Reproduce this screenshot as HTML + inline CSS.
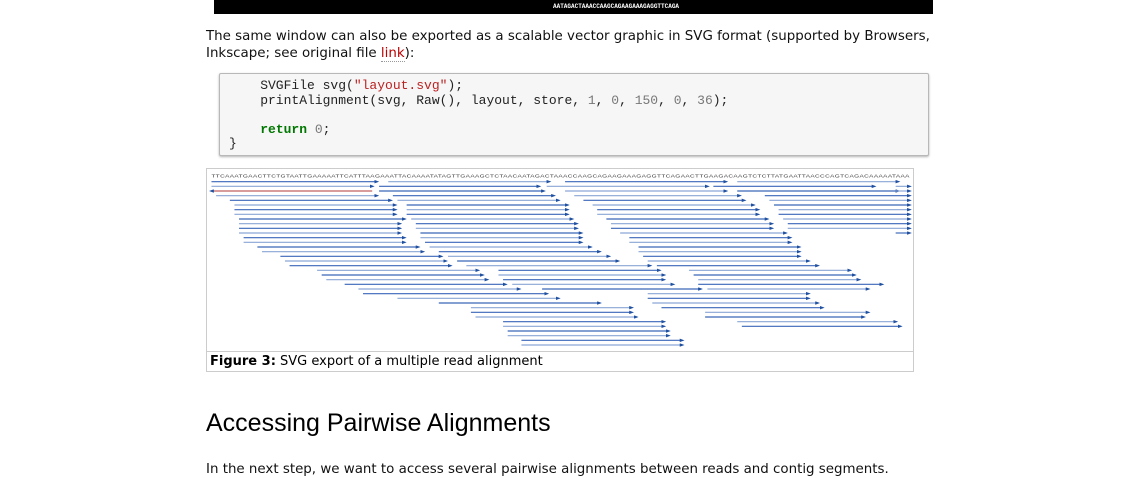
<!DOCTYPE html>
<html><head><meta charset="utf-8"><style>
body{margin:0;width:1131px;height:471px;background:#fff;overflow:hidden;position:relative;font-family:"DejaVu Sans",Verdana,sans-serif;}
.bar{position:absolute;left:214px;top:0;width:719px;height:14px;background:#000;}
.bar span{position:absolute;left:339px;top:3px;font:bold 6px "Liberation Mono",monospace;color:#fff;letter-spacing:0;}
p{position:absolute;margin:0;font-size:13.4px;line-height:17px;color:#111;}
a{color:#b00;text-decoration:none;border-bottom:1px dotted #999;}
.code{position:absolute;left:219px;top:73px;width:708px;height:81px;background:#f6f6f6;border:1px solid #b8b8b8;border-radius:2px;box-shadow:0 1px 2px rgba(0,0,0,.3);}
.code pre{margin:0;position:absolute;left:9px;top:5px;font:13px/14.5px "Liberation Mono","DejaVu Sans Mono",monospace;color:#222;}
.s{color:#b22;}.n{color:#777;}.k{color:#070;font-weight:bold;}
.fig{position:absolute;left:206px;top:168px;width:706px;height:202px;border:1px solid #ccc;}
.cap{position:absolute;left:0;top:182px;width:706px;height:20px;border-top:1px solid #ccc;font-size:13px;line-height:20px;}
.cap b{margin-left:3px;}
h2{position:absolute;left:206px;top:409px;margin:0;font:normal 25px "Liberation Sans",Arial,sans-serif;color:#000;}
</style></head><body>
<div class="bar"><span>AATAGACTAAACCAAGCAGAAGAAAGAGGTTCAGA</span></div>
<p style="left:206px;top:28px">The same window can also be exported as a scalable vector graphic in SVG format (supported by Browsers,<br>Inkscape; see original file <a>link</a>):</p>
<div class="code"><pre>    SVGFile svg(<span class="s">"layout.svg"</span>);
    printAlignment(svg, Raw(), layout, store, <span class="n">1</span>, <span class="n">0</span>, <span class="n">150</span>, <span class="n">0</span>, <span class="n">36</span>);

    <span class="k">return</span> <span class="n">0</span>;
}</pre></div>
<div class="fig"><div class="cap"><b>Figure 3:</b> SVG export of a multiple read alignment</div></div>
<svg style="position:absolute;left:200px;top:165px" width="720" height="183" viewBox="0 0 1568 549" preserveAspectRatio="none">
<defs><marker id="a" markerWidth="3" markerHeight="3" refX="1.5" refY="1.5" orient="auto" markerUnits="strokeWidth"><path d="M0,0L3,1.5L0,3z" fill="#2050a0"/></marker></defs>
<text x="25" y="38" font-family="Liberation Sans" font-size="14" fill="#333" textLength="1520" lengthAdjust="spacing">TTCAAATGAACTTCTGTAATTGAAAAATTCATTTAAGAAATTACAAAATATAGTTGAAAGCTCTAACAATAGACTAAACCAAGCAGAAGAAAGAGGTTCAGAACTTGAAGACAAGTCTCTTATGAATTAACCCAGTCAGACAAAAATAAA</text>
<g stroke-width="3.5" marker-end="url(#a)" id="L"></g>
</svg>
<script>
var R=[[50,[25,385],[410,760],[795,1145],[1170,1520]],
[64,[25,375],[390,738],[755,1105],[1118,1468],[1515,1545]],
[78,[390,748],[795,1145],[1170,1520],[1515,1545]],
[92,[35,385],[420,770],[815,1175],[1230,1545]],
[106,[65,415],[430,780],[835,1185],[1240,1545]],
[120,[75,425],[450,800],[855,1205],[1250,1545]],
[134,[75,425],[450,800],[865,1215],[1260,1545]],
[148,[75,425],[450,800],[865,1215],[1260,1545]],
[162,[85,445],[460,810],[885,1235],[1270,1545]],
[176,[85,435],[470,820],[895,1245],[1280,1545]],
[190,[85,435],[470,820],[895,1245],[1280,1545]],
[204,[85,435],[480,830],[915,1275],[1515,1545]],
[218,[95,445],[480,830],[935,1285]],
[232,[95,445],[490,830],[935,1285]],
[246,[125,475],[500,850],[955,1305]],
[260,[135,485],[520,870],[955,1305]],
[274,[175,525],[540,890],[965,1305]],
[288,[185,535],[560,910],[975,1325]],
[302,[195,545],[580,980],[995,1345]],
[316,[255,605],[650,1000],[1065,1415]],
[330,[265,615],[650,1010],[1075,1425]],
[344,[275,625],[660,1010],[1085,1435]],
[358,[315,665],[680,1030],[1085,1485]],
[372,[345,695],[745,1090],[1105,1455]],
[386,[355,755],[975,1325]],
[400,[430,780],[975,1325]],
[414,[520,870],[985,1345]],
[428,[590,940],[1005,1355]],
[442,[590,940],[1100,1455]],
[456,[600,950],[1100,1445]],
[470,[660,1010],[1170,1515]],
[484,[660,1010],[1180,1525]],
[498,[670,1020]],[512,[670,1020]],[526,[700,1050]],[540,[700,1050]]];
var g=document.getElementById('L'),h='';
R.forEach(function(r,i){var y=r[0];for(var j=1;j<r.length;j++){var c=(i+j)%2?'#3a66b8':'#8aa6d6';h+='<line x1="'+r[j][0]+'" x2="'+r[j][1]+'" y1="'+y+'" y2="'+y+'" stroke="'+c+'"/>';}});
g.innerHTML=h+'<line x1="375" x2="25" y1="78" y2="78" stroke="#c06060"/>';
</script>
<h2>Accessing Pairwise Alignments</h2>
<p style="left:206px;top:461px">In the next step, we want to access several pairwise alignments between reads and contig segments.</p>
</body></html>
